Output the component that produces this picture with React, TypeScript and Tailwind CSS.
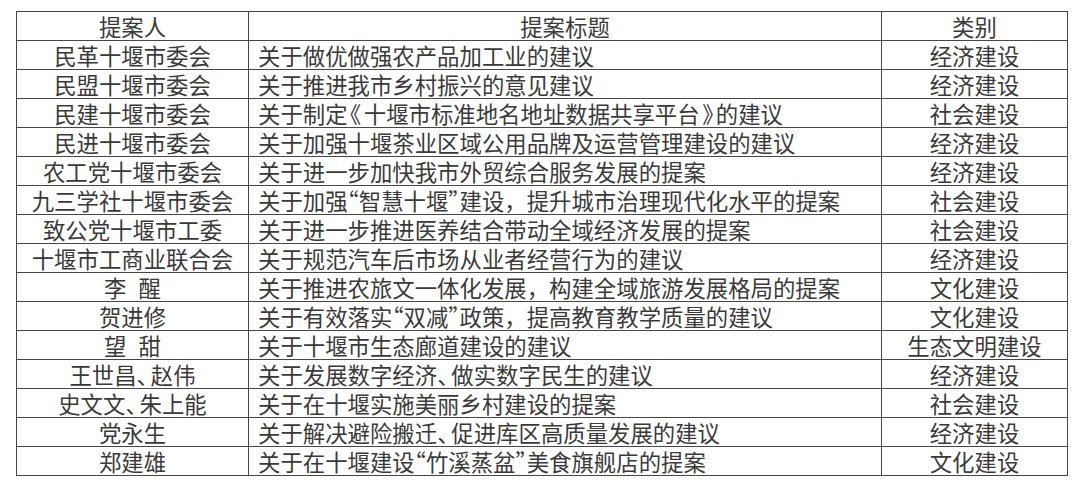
import React from "react";

function fmt(s: string): React.ReactNode[] {
  const out: React.ReactNode[] = [];
  let buf = "";
  let k = 0;
  const flush = () => {
    if (buf) {
      out.push(buf);
      buf = "";
    }
  };
  for (const ch of s) {
    if (ch === "“" || ch === "”") {
      flush();
      out.push(
        <span key={k++} className="[font-feature-settings:'halt']">
          {ch}
        </span>
      );
    } else if (ch === "《" || ch === "》") {
      flush();
      out.push(
        <span key={k++} className="[font-feature-settings:'halt'] mx-[2.5px]">
          {ch}
        </span>
      );
    } else if (ch === "、") {
      flush();
      out.push(
        <span key={k++} className="[font-feature-settings:'halt'] mr-[3px]">
          {ch}
        </span>
      );
    } else if (ch === " ") {
      flush();
      out.push(<span key={k++} className="inline-block w-[12px]"></span>);
    } else {
      buf += ch;
    }
  }
  flush();
  return out;
}

const rows: [string, string, string][] = [
  ["民革十堰市委会", "关于做优做强农产品加工业的建议", "经济建设"],
  ["民盟十堰市委会", "关于推进我市乡村振兴的意见建议", "经济建设"],
  ["民建十堰市委会", "关于制定《十堰市标准地名地址数据共享平台》的建议", "社会建设"],
  ["民进十堰市委会", "关于加强十堰茶业区域公用品牌及运营管理建设的建议", "经济建设"],
  ["农工党十堰市委会", "关于进一步加快我市外贸综合服务发展的提案", "经济建设"],
  ["九三学社十堰市委会", "关于加强“智慧十堰”建设，提升城市治理现代化水平的提案", "社会建设"],
  ["致公党十堰市工委", "关于进一步推进医养结合带动全域经济发展的提案", "社会建设"],
  ["十堰市工商业联合会", "关于规范汽车后市场从业者经营行为的建议", "经济建设"],
  ["李 醒", "关于推进农旅文一体化发展，构建全域旅游发展格局的提案", "文化建设"],
  ["贺进修", "关于有效落实“双减”政策，提高教育教学质量的建议", "文化建设"],
  ["望 甜", "关于十堰市生态廊道建设的建议", "生态文明建设"],
  ["王世昌、赵伟", "关于发展数字经济、做实数字民生的建议", "经济建设"],
  ["史文文、朱上能", "关于在十堰实施美丽乡村建设的提案", "社会建设"],
  ["党永生", "关于解决避险搬迁、促进库区高质量发展的建议", "经济建设"],
  ["郑建雄", "关于在十堰建设“竹溪蒸盆”美食旗舰店的提案", "文化建设"],
];

export default function App() {
  const cell = "border border-[#474747] h-[29px] p-0 leading-[28px] whitespace-nowrap";
  return (
    <div
      lang="zh-CN"
      className="w-[1080px] h-[491px] bg-white pl-[16px] pt-[11px] text-[#3a3a3a] text-[22.4px] [font-family:'Noto_Sans_CJK_SC',sans-serif]"
    >
      <table className="border-collapse table-fixed w-[1051px]">
        <colgroup>
          <col className="w-[232px]" />
          <col className="w-[633px]" />
          <col className="w-[186px]" />
        </colgroup>
        <thead>
          <tr>
            <th className={`${cell} font-normal text-center`}>提案人</th>
            <th className={`${cell} font-normal text-center`}>提案标题</th>
            <th className={`${cell} font-normal text-center`}>类别</th>
          </tr>
        </thead>
        <tbody>
          {rows.map((r, i) => (
            <tr key={i}>
              <td className={`${cell} text-center`}>{fmt(r[0])}</td>
              <td className={`${cell} text-left pl-[9px]`}>{fmt(r[1])}</td>
              <td className={`${cell} text-center`}>{fmt(r[2])}</td>
            </tr>
          ))}
        </tbody>
      </table>
    </div>
  );
}
